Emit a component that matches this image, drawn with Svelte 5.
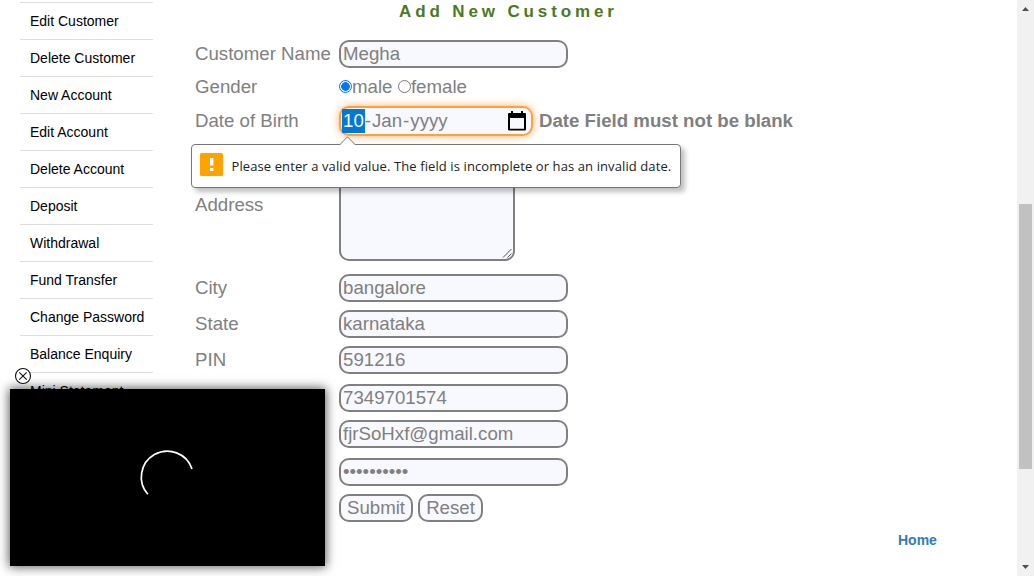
<script>
  const menu = ['Edit Customer', 'Delete Customer', 'New Account', 'Edit Account', 'Delete Account', 'Deposit', 'Withdrawal', 'Fund Transfer', 'Change Password', 'Balance Enquiry', 'Mini Statement'];
</script>

<div class="page">
  <nav>
    {#each menu as item}
      <a href="#top">{item}</a>
    {/each}
  </nav>

  <main>
    <h1>Add New Customer</h1>
    <div class="form">
      <label for="name">Customer Name</label>
      <div class="cell"><div class="field" id="name">Megha</div></div>

      <label for="gender">Gender</label>
      <div class="cell gender" id="gender">
        <span class="radio on"></span><span class="opt">male</span>
        <span class="radio"></span><span>female</span>
      </div>

      <label for="dob">Date of Birth</label>
      <div class="cell">
        <div class="field date" id="dob">
          <span class="sel">10</span><span>-</span><span class="seg">Jan</span><span>-</span><span class="seg">yyyy</span>
          <svg class="cal" width="18" height="20" viewBox="0 0 18 20">
            <path d="M1 2h16a1 1 0 0 1 1 1v15.500a1 1 0 0 1-1 1H1a1 1 0 0 1-1-1V3a1 1 0 0 1 1-1zM2 7v10.700h14V7z" fill="#000" fill-rule="evenodd" />
            <path d="M3 0h2v2H3zM13 0h2v2h-2z" fill="#000" />
          </svg>
        </div>
        <strong>Date Field must not be blank</strong>
        <div class="tip">
          <svg class="arrow" width="18" height="9" viewBox="0 0 18 9">
            <path d="M0.500 9L8.500 0.800L16.500 9" fill="#fff" stroke="#777" />
          </svg>
          <svg width="23" height="23" viewBox="0 0 23 23">
            <rect width="23" height="23" rx="1.500" fill="#ffa300" />
            <path d="M10 5h3.400v7.500H10zM10 15h3.400v3H10z" fill="#fff" />
          </svg>
          <span>Please enter a valid value. The field is incomplete or has an invalid date.</span>
        </div>
      </div>

      <label for="address">Address</label>
      <div class="cell">
        <div class="field area" id="address">
          <svg width="11" height="11" viewBox="0 0 11 11"><path d="M1 9.500L9.500 1M5.500 9.500L9.500 5.500" stroke="#555" fill="none" /></svg>
        </div>
      </div>

      <label for="city">City</label>
      <div class="cell"><div class="field" id="city">bangalore</div></div>
      <label for="state">State</label>
      <div class="cell"><div class="field" id="state">karnataka</div></div>
      <label for="pin">PIN</label>
      <div class="cell"><div class="field" id="pin">591216</div></div>

      <div class="cell right"><div class="field">7349701574</div></div>
      <div class="cell right"><div class="field">fjrSoHxf@gmail.com</div></div>
      <div class="cell right"><div class="field">••••••••••</div></div>
      <div class="cell right">
        <div class="btn submit">Submit</div>
        <div class="btn reset">Reset</div>
      </div>
    </div>
    <a class="home" href="#top">Home</a>
  </main>

  <aside class="scroll">
    <svg width="17" height="17" viewBox="0 0 17 17"><path d="M5 11L8.500 7L12 11z" fill="#505050" /></svg>
    <div class="thumb"></div>
    <svg width="17" height="17" viewBox="0 0 17 17"><path d="M5 6L8.500 10L12 6z" fill="#505050" /></svg>
  </aside>

  <div class="video">
    <svg width="61" height="61" viewBox="-30 -30 61 61">
      <path d="M-19.200 17.300A26 26 0 1 1 25 -8.100" fill="none" stroke="#fff" stroke-width="1.700" />
    </svg>
  </div>
  <svg class="close" width="18" height="18" viewBox="-9 -9 18 18">
    <circle r="7.500" fill="#fff" stroke="#111" stroke-width="1.100" />
    <path d="M-3.700 -3.700L3.700 3.700M3.700 -3.700L-3.700 3.700" stroke="#111" stroke-width="1.100" />
  </svg>
</div>

<style>
  :global(body) { margin: 0; overflow: hidden; background: #fff; }
  .page {
    position: relative;
    display: flex;
    height: 576px;
    overflow: hidden;
    font-family: "Liberation Sans", Arial, sans-serif;
  }
  a { text-decoration: none; }
  nav { width: 133px; margin: 2px 42px 0 20px; flex: none; border-top: 1px solid #ddd; }
  nav a {
    display: block;
    height: 36px;
    padding-left: 10px;
    border-bottom: 1px solid #ddd;
    font-size: 14px;
    line-height: 36px;
    color: #000;
    white-space: nowrap;
  }
  main { flex: 1; display: flex; flex-direction: column; font-size: 18.667px; color: gray; }
  h1 {
    height: 36px;
    margin: 0 0 0 204px;
    font-size: 17px;
    line-height: 24px;
    letter-spacing: 3.870px;
    color: #4b7a1d;
  }
  .form {
    display: grid;
    grid-template-columns: 144px 1fr;
    grid-template-rows: 36px 30px 38px 130px 36px 36px 36px 40px 32px 44px 28px;
    align-items: center;
    white-space: nowrap;
  }
  .cell { position: relative; display: flex; align-items: center; }
  .gender { padding-bottom: 1px; }
  .right { grid-column: 2; }
  .field, .btn {
    box-sizing: border-box;
    height: 28px;
    border: 2px solid gray;
    border-radius: 10px;
    background: #f8f8ff;
    line-height: 24px;
  }
  .field { width: 229px; padding: 0 2px; }
  .area { position: relative; width: 176px; height: 112px; }
  .area svg { position: absolute; right: 0; bottom: 0; }
  .btn { text-align: center; }
  .submit { width: 74px; margin-right: 5px; }
  .reset { width: 65px; }
  .radio {
    box-sizing: border-box;
    width: 13px;
    height: 13px;
    border: 1px solid #767676;
    border-radius: 50%;
  }
  .on { border-color: #0075ff; background: radial-gradient(circle, #0075ff 4px, #fff 4.600px); }
  .opt { margin-right: 5.500px; }
  .date {
    display: flex;
    align-items: center;
    width: 194px;
    height: 30px;
    padding: 0 5px 0 1px;
    border-color: #ffa03c;
    box-shadow: 0 0 8px #ffb066;
  }
  .sel { height: 24px; padding: 0 1px; background: #0078d7; color: #fff; }
  .seg { padding: 0 1px; }
  .cal { margin-left: auto; }
  strong { margin-left: 6px; }
  .tip {
    position: absolute;
    left: -148px;
    top: 38px;
    z-index: 2;
    box-sizing: border-box;
    display: flex;
    width: 490px;
    height: 44px;
    padding: 8px;
    border: 1px solid #777;
    border-radius: 4px;
    background: #fff;
    box-shadow: 4px 4px 5px rgba(0, 0, 0, 0.25);
    font: 13px/27px "Open Sans", sans-serif;
    letter-spacing: 0.100px;
    color: #222;
  }
  .tip span { margin-left: 8.500px; }
  .arrow { position: absolute; left: 147px; top: -9px; }
  .home { margin: 10px 0 0 703px; font-size: 14px; font-weight: bold; line-height: 16px; color: #337ab7; }
  .scroll { display: flex; flex-direction: column; justify-content: space-between; width: 17px; background: #f1f1f1; }
  .thumb { height: 265px; margin: 187px 2px auto; background: #c1c1c1; }
  .video {
    position: absolute;
    left: 10px;
    top: 389px;
    display: grid;
    place-items: center;
    width: 315px;
    height: 177px;
    background: #000;
    box-shadow: 0 0 10px 1px rgba(0, 0, 0, 0.65);
  }
  .close { position: absolute; left: 14px; top: 367px; }
</style>
